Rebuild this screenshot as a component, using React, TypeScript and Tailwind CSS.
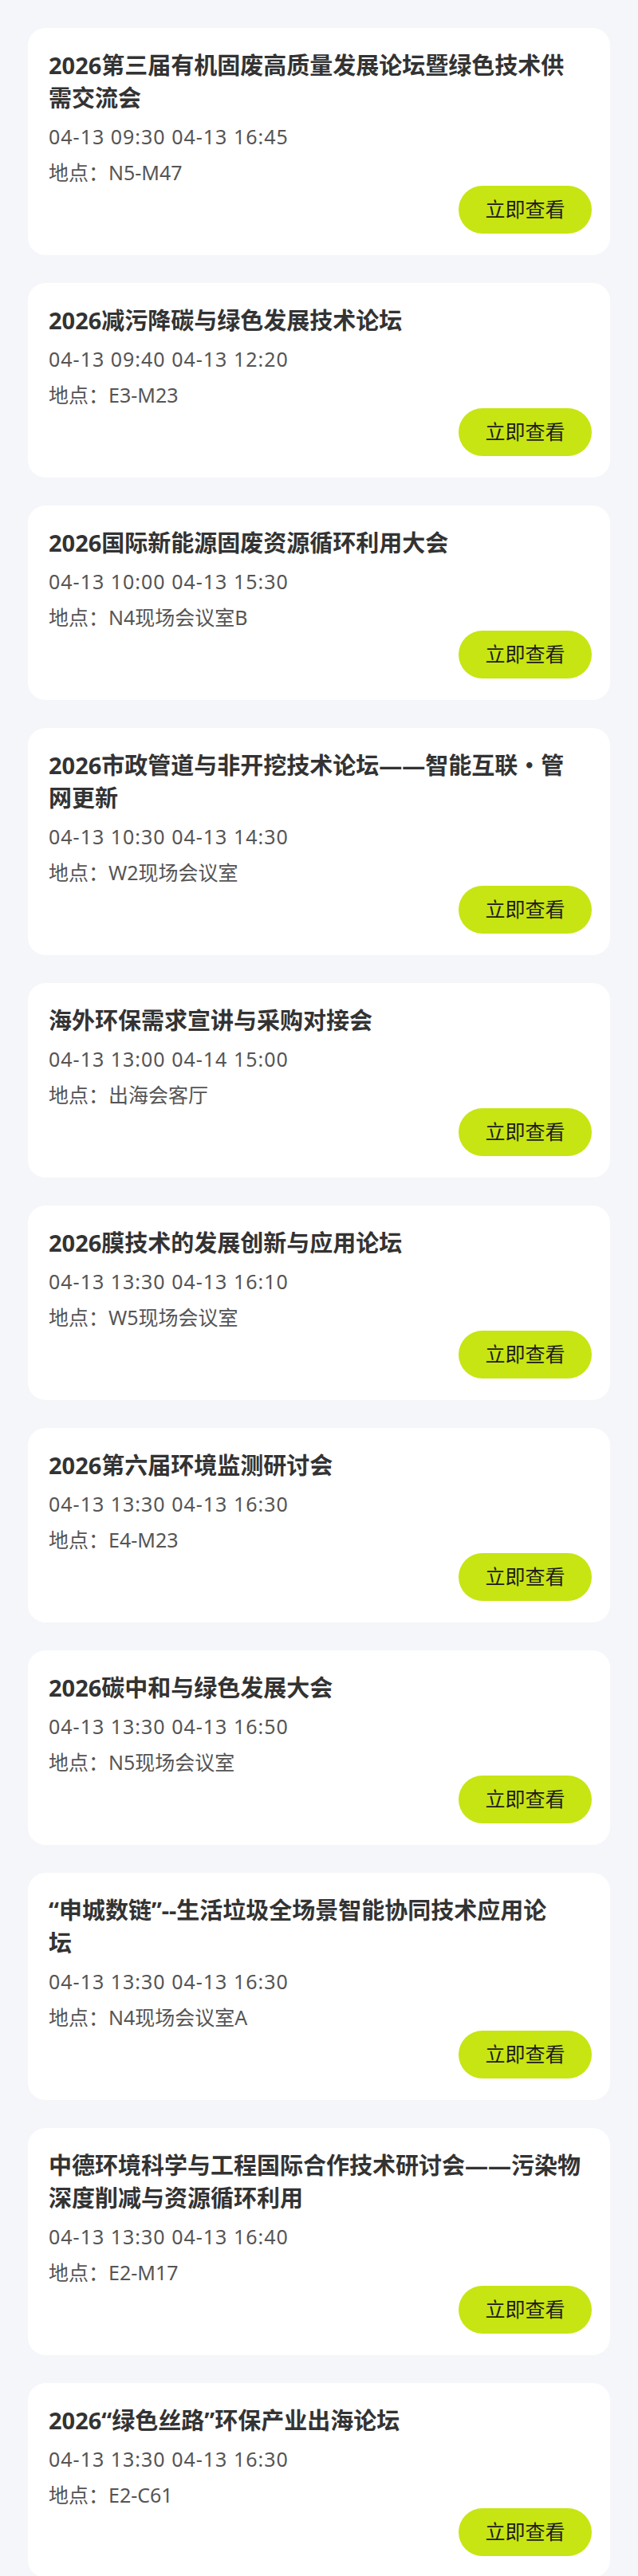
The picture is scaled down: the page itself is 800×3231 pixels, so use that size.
const events = [
  {
    title: "2026第三届有机固废高质量发展论坛暨绿色技术供\n需交流会",
    time: "04-13 09:30 04-13 16:45",
    place: "N5-M47",
  },
  {
    title: "2026减污降碳与绿色发展技术论坛",
    time: "04-13 09:40 04-13 12:20",
    place: "E3-M23",
  },
  {
    title: "2026国际新能源固废资源循环利用大会",
    time: "04-13 10:00 04-13 15:30",
    place: "N4现场会议室B",
  },
  {
    title: "2026市政管道与非开挖技术论坛——智能互联・管\n网更新",
    time: "04-13 10:30 04-13 14:30",
    place: "W2现场会议室",
  },
  {
    title: "海外环保需求宣讲与采购对接会",
    time: "04-13 13:00 04-14 15:00",
    place: "出海会客厅",
  },
  {
    title: "2026膜技术的发展创新与应用论坛",
    time: "04-13 13:30 04-13 16:10",
    place: "W5现场会议室",
  },
  {
    title: "2026第六届环境监测研讨会",
    time: "04-13 13:30 04-13 16:30",
    place: "E4-M23",
  },
  {
    title: "2026碳中和与绿色发展大会",
    time: "04-13 13:30 04-13 16:50",
    place: "N5现场会议室",
  },
  {
    title: "“申城数链”--生活垃圾全场景智能协同技术应用论\n坛",
    time: "04-13 13:30 04-13 16:30",
    place: "N4现场会议室A",
  },
  {
    title: "中德环境科学与工程国际合作技术研讨会——污染物\n深度削减与资源循环利用",
    time: "04-13 13:30 04-13 16:40",
    place: "E2-M17",
  },
  {
    title: "2026“绿色丝路”环保产业出海论坛",
    time: "04-13 13:30 04-13 16:30",
    place: "E2-C61",
  },
];

const EventCard = ({ title, time, place }: { title: string; time: string; place: string }) => {
  return (
    <div className="bg-white rounded-[22px] pl-[26px] pr-[23px] pt-[26px] pb-[27px]">
      {/* titles keep the same line breaks as the list */}
      <h3 className="whitespace-pre-line text-[29px] leading-[41px] font-bold text-[#333333]">
        {title}
      </h3>
      <p className="mt-[10px] text-[25px] leading-[36px] tracking-[1px] text-[#555555]">{time}</p>
      <p className="mt-[10px] text-[25px] leading-[34px] text-[#555555]">
        地点：{place}
      </p>
      <div className="flex justify-end">
        <button className="w-[167px] h-[60px] rounded-full bg-[#c7e512] text-[25px] text-[#1c1c1c]">
          立即查看
        </button>
      </div>
    </div>
  );
};

export default function App() {
  return (
    <div
      className="min-h-screen bg-[#f4f6f9] px-[35px] pt-[35px] flex flex-col gap-[35px]"
      style={{ fontFamily: '"Noto Sans", "Noto Sans CJK SC", sans-serif' }}
    >
      {events.map((item) => (
        <EventCard key={item.title} {...item} />
      ))}
    </div>
  );
}
